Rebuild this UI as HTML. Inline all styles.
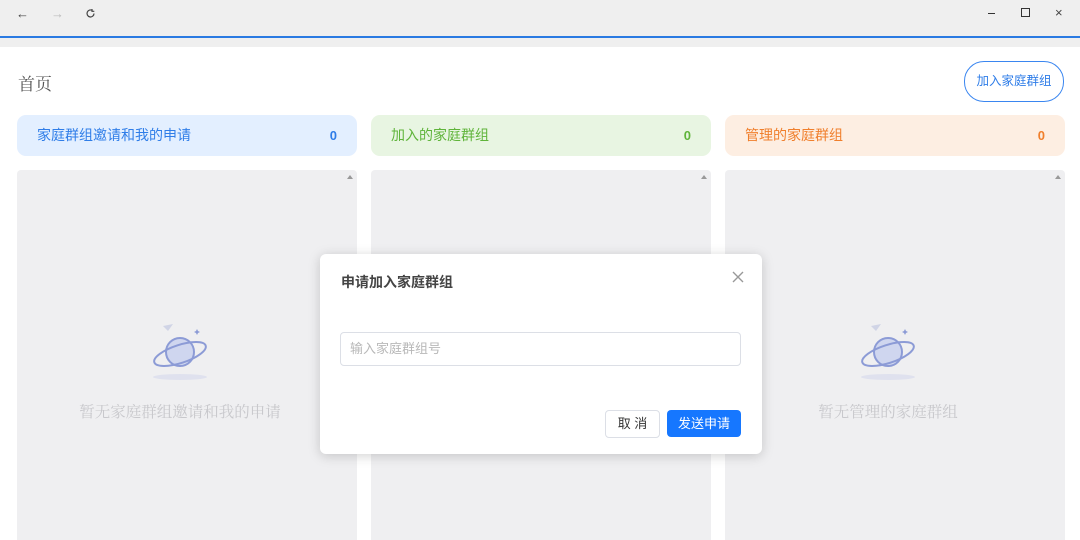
<!DOCTYPE html><html><head><meta charset="utf-8"><style>
body{margin:0;width:1080px;height:540px;overflow:hidden;background:#fff;font-family:"Liberation Sans","Noto Sans CJK SC",sans-serif;position:relative}
.top{position:absolute;left:0;top:0;width:1080px;height:36px;background:#efefef}
.line{position:absolute;left:0;top:36px;width:1080px;height:2px;background:#2a7ae2}
.strip{position:absolute;left:0;top:38px;width:1080px;height:9px;background:#efefef}
.ic{position:absolute;top:6px;font-size:13px;color:#444}
.title{position:absolute;left:18px;top:70px;font-size:17px;color:#555;font-family:"Noto Serif CJK SC",serif}
.jbtn{position:absolute;left:964px;top:61px;width:98px;height:39px;border:1px solid #3a86f0;border-radius:20px;color:#2f7de8;font-size:12.5px;text-align:center;line-height:39px}
.card{position:absolute;top:115px;width:340px;height:41px;border-radius:9px;font-size:14px;line-height:41px}
.card span{position:absolute;left:20px}.card b{position:absolute;right:20px;font-weight:bold;font-size:13px}
.panel{position:absolute;top:170px;width:340px;height:370px;background:#efeff1;border-radius:4px 4px 0 0}
.panel i{position:absolute;right:4px;top:5px;width:0;height:0;border-left:3px solid transparent;border-right:3px solid transparent;border-bottom:4px solid #999}
.empty{position:absolute;top:230px;left:0;width:326px;text-align:center;font-size:15.5px;color:#c8c8cc;font-family:"Noto Serif CJK SC",serif}
.planet{position:absolute;top:152px;left:134px}
.dlg{position:absolute;left:320px;top:254px;width:442px;height:200px;background:#fff;border-radius:6px;box-shadow:0 2px 12px rgba(0,0,0,.18)}
</style></head><body>
<div class="top"></div><div class="line"></div><div class="strip"></div>
<div class="ic" style="left:16px">&#8592;</div><div class="ic" style="left:51px;color:#bbb">&#8594;</div>
<svg style="position:absolute;left:85px;top:8px" width="11" height="11" viewBox="0 0 11 11"><path d="M9 5.5A3.5 3.5 0 1 1 7.5 2.6M7 1v2.3h2.3" fill="none" stroke="#444" stroke-width="1.2"/></svg>
<div style="position:absolute;left:988px;top:13px;width:7px;height:1px;background:#333"></div>
<div style="position:absolute;left:1021px;top:8px;width:7px;height:7px;border:1px solid #333"></div>
<div class="ic" style="left:1055px;top:5px;font-size:13px">×</div>
<div class="title">首页</div>
<div class="jbtn">加入家庭群组</div>
<div class="card" style="left:17px;background:#e3efff;color:#2f7de8"><span>家庭群组邀请和我的申请</span><b>0</b></div>
<div class="card" style="left:371px;background:#e8f5e2;color:#5fb43a"><span>加入的家庭群组</span><b>0</b></div>
<div class="card" style="left:725px;background:#fdeee2;color:#f07f2c"><span>管理的家庭群组</span><b>0</b></div>
<div class="panel" style="left:17px"><i></i>
<svg class="planet" width="60" height="60" viewBox="0 0 60 60"><ellipse cx="29" cy="55" rx="27" ry="3" fill="#dfe1ee"/><circle cx="29" cy="30" r="14" fill="#cfd6ef" stroke="#8c9bd6" stroke-width="2"/><ellipse cx="29" cy="32" rx="27" ry="9" transform="rotate(-18 29 32)" fill="none" stroke="#8c9bd6" stroke-width="2"/><path d="M12 4l10 -2 -5 7z" fill="#d0d4e6"/><path d="M46 7l1 2 2 1-2 1-1 2-1-2-2-1 2-1z" fill="#8c9bd6"/></svg>
<div class="empty">暂无家庭群组邀请和我的申请</div></div>
<div class="panel" style="left:371px"><i></i></div>
<div class="panel" style="left:725px"><i></i>
<svg class="planet" width="60" height="60" viewBox="0 0 60 60"><ellipse cx="29" cy="55" rx="27" ry="3" fill="#dfe1ee"/><circle cx="29" cy="30" r="14" fill="#cfd6ef" stroke="#8c9bd6" stroke-width="2"/><ellipse cx="29" cy="32" rx="27" ry="9" transform="rotate(-18 29 32)" fill="none" stroke="#8c9bd6" stroke-width="2"/><path d="M12 4l10 -2 -5 7z" fill="#d0d4e6"/><path d="M46 7l1 2 2 1-2 1-1 2-1-2-2-1 2-1z" fill="#8c9bd6"/></svg>
<div class="empty">暂无管理的家庭群组</div></div>
<div class="dlg">
<div style="position:absolute;left:21px;top:18px;font-size:14px;font-weight:bold;color:#444">申请加入家庭群组</div>
<svg style="position:absolute;left:412px;top:17px" width="12" height="12"><path d="M1 1L11 11M11 1L1 11" stroke="#999" stroke-width="1.4"/></svg>
<div style="position:absolute;left:20px;top:78px;width:399px;height:32px;border:1px solid #dcdfe6;border-radius:4px;font-size:13px;color:#b8b8b8;line-height:32px;text-indent:9px">输入家庭群组号</div>
<div style="position:absolute;left:285px;top:156px;width:53px;height:26px;border:1px solid #dcdfe6;border-radius:4px;font-size:13px;color:#333;text-align:center;line-height:26px">取 消</div>
<div style="position:absolute;left:347px;top:156px;width:74px;height:27px;background:#1677ff;border-radius:4px;font-size:13px;color:#fff;text-align:center;line-height:27px">发送申请</div>
</div>
</body></html>
